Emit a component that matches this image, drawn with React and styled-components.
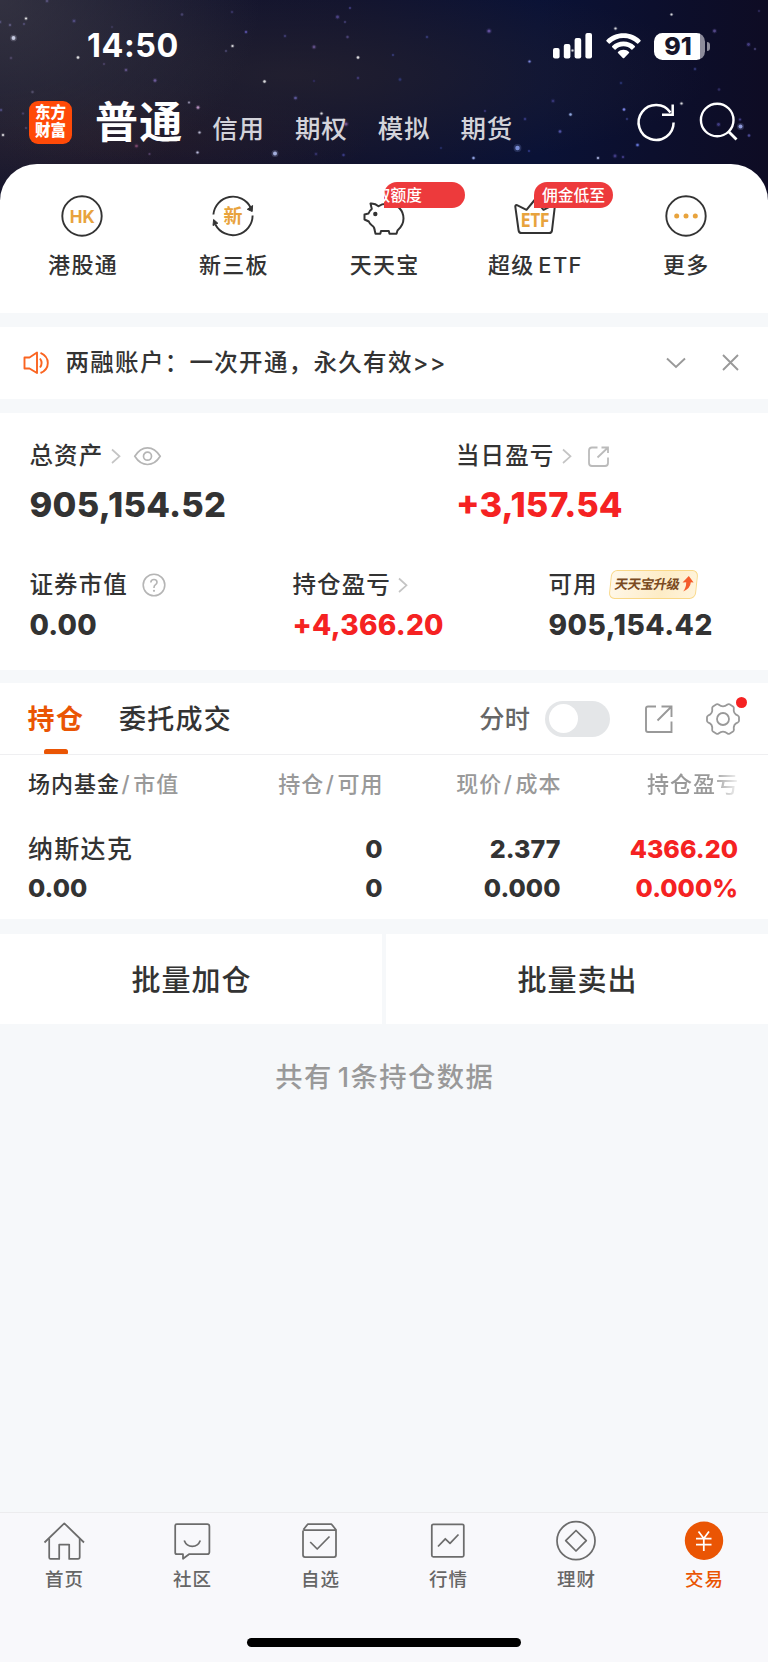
import React from 'react';
import styled, { createGlobalStyle } from 'styled-components';

const GlobalStyle = createGlobalStyle`
  * { box-sizing: border-box; }
  body {
    margin: 0;
    background: #f6f8fa;
    font-family: Inter, "Noto Sans CJK SC", sans-serif;
    color: #333;
    -webkit-font-smoothing: antialiased;
  }
  svg { display: block; flex: none; overflow: visible; }
`;

const Page = styled.div`
  width: 768px;
  height: 1662px;
  display: flex;
  flex-direction: column;
  background: #f6f8fa;
  overflow: hidden;
`;

const Text = styled.span`
  display: block;
  white-space: nowrap;
  font-size: ${p => p.$size}px;
  line-height: ${p => p.$line || 36}px;
  font-weight: ${p => p.$weight || 500};
  letter-spacing: ${p => p.$track || 0}px;
  word-spacing: -3.5px;
  margin-right: ${p => -(p.$track || 0)}px;
  color: ${p => p.$color || '#333'};
`;

/* Header */
const Header = styled.header`
  position: relative;
  height: 200px;
  flex: none;
  background:
    radial-gradient(ellipse 260px 200px at 0 0, rgba(70, 68, 78, 0.6), transparent),
    radial-gradient(ellipse 420px 100px at 290px 75px, rgba(40, 36, 48, 0.7), transparent),
    radial-gradient(ellipse 240px 60px at 130px 140px, rgba(48, 30, 38, 0.5), transparent),
    linear-gradient(90deg, #15152c 0, #10122e 45%, #0a1236 70%, #0e0c24 100%);
`;
const Sky = styled.svg`
  position: absolute;
  inset: 0;
`;
const StatusBar = styled.div`
  position: relative;
  height: 92px;
  display: flex;
  align-items: center;
  justify-content: space-between;
  padding: 0 63.5px 0 87px;
`;
const StatusIcons = styled.div`
  display: flex;
  align-items: center;
  gap: 13px;
`;
const Battery = styled.div`
  position: relative;
  width: 51px;
  height: 27px;
  border-radius: 8.5px;
  background: linear-gradient(90deg, #fff 46px, #8d8c9b 46px);
  display: flex;
  align-items: center;
  justify-content: center;
  padding-right: 2px;
  &::after {
    content: '';
    position: absolute;
    left: 53px;
    top: 9px;
    width: 3.5px;
    height: 9px;
    border-radius: 0 4px 4px 0;
    background: #8d8c9b;
  }
`;
const AccountBar = styled.div`
  position: relative;
  height: 60px;
  display: flex;
  align-items: center;
  padding: 0 30px 0 29px;
`;
const Logo = styled.div`
  width: 43px;
  height: 43px;
  border-radius: 9px;
  background: #ff4a08;
  display: flex;
  flex-direction: column;
  align-items: center;
  justify-content: center;
`;
const AccountTabs = styled.nav`
  display: flex;
  gap: 31px;
  margin: 14px 0 0 30px;
`;
const HeaderIcons = styled.div`
  display: flex;
  gap: 25px;
  margin-left: auto;
`;

/* Shortcuts */
const Shortcuts = styled.section`
  position: relative;
  flex: none;
  margin-top: -36.5px;
  height: 149px;
  padding: 28px 7px 0;
  display: grid;
  grid-template-columns: repeat(5, 1fr);
  background: #fff;
  border-radius: 37px 37px 0 0;
`;
const Shortcut = styled.div`
  position: relative;
  display: flex;
  flex-direction: column;
  align-items: center;
  gap: 7px;
`;
const Badge = styled.div`
  position: absolute;
  left: 75px;
  top: -10px;
  width: ${p => p.$width}px;
  height: 26.5px;
  padding-left: ${p => p.$inset}px;
  border-radius: 13px 13px 13px 0;
  background: #ed3a3c;
  overflow: hidden;
`;

/* Notice */
const Notice = styled.section`
  flex: none;
  margin-top: 14.5px;
  height: 71.5px;
  display: flex;
  align-items: center;
  padding: 0 29px 0 23px;
  background: #fff;
`;
const NoticeText = styled.div`
  flex: 1;
  margin: 1px 0 0 16.5px;
`;
const NoticeActions = styled.div`
  display: flex;
  align-items: center;
  gap: 36px;
`;

/* Assets */
const Assets = styled.section`
  flex: none;
  margin-top: 14.5px;
  height: 256.5px;
  padding: 25px 0 0 29.5px;
  background: #fff;
`;
const AssetRow = styled.div`
  display: grid;
  grid-template-columns: ${p => p.$cols};
  margin-bottom: ${p => p.$after || 0}px;
`;
const AssetLabel = styled.div`
  display: flex;
  align-items: center;
  height: 36px;
  margin-bottom: ${p => p.$after}px;
`;
const Chevron = styled.svg`
  margin-left: 8.5px;
`;
const Trailing = styled.div`
  margin-left: ${p => p.$gap}px;
`;
const UpgradeTag = styled.div`
  position: relative;
  width: 89px;
  height: 28.5px;
  margin: -2px 0 0 12.5px;
  display: flex;
  align-items: center;
  gap: 2px;
  padding-left: 6px;
  &::before {
    content: '';
    position: absolute;
    inset: 0 1px;
    border: 1.5px solid #f9d888;
    border-radius: 6px;
    background: linear-gradient(100deg, #fff8ea, #fdecc6 60%, #fff4dc);
    transform: skewX(-6deg);
  }
  & > * { position: relative; }
`;
const TagText = styled.span`
  font-size: 13.3px;
  line-height: 20px;
  font-weight: 700;
  color: #7a4a22;
  white-space: nowrap;
  letter-spacing: -0.4px;
  transform: skewX(-10deg);
`;

/* Holdings */
const Holdings = styled.section`
  flex: none;
  margin-top: 13.5px;
  height: 236px;
  background: #fff;
`;
const TabBar = styled.div`
  height: 72px;
  display: flex;
  align-items: center;
  padding: 0 28px 0 27.5px;
  border-bottom: 1px solid #efeff1;
`;
const Tab = styled.div`
  position: relative;
  height: 71px;
  display: flex;
  align-items: center;
  padding-top: 2px;
  margin-right: 36px;
  &::after {
    content: '';
    display: ${p => (p.$active ? 'block' : 'none')};
    position: absolute;
    left: 16px;
    bottom: 0;
    width: 24.5px;
    height: 5px;
    border-radius: 2.5px 2.5px 1px 1px;
    background: #ea5504;
  }
`;
const TabTools = styled.div`
  display: flex;
  align-items: center;
  margin-left: auto;
`;
const Toggle = styled.div`
  width: 64.5px;
  height: 36px;
  margin: 0 35.5px 0 15px;
  padding: 3.5px;
  border-radius: 18px;
  background: #e4e6e8;
  &::before {
    content: '';
    display: block;
    width: 29px;
    height: 29px;
    border-radius: 50%;
    background: #fff;
  }
`;
const GearButton = styled.div`
  position: relative;
  margin-left: 33px;
  &::after {
    content: '';
    position: absolute;
    right: -7px;
    top: -5.5px;
    width: 11px;
    height: 11px;
    border-radius: 50%;
    background: #f52222;
  }
`;
const TableRow = styled.div`
  display: grid;
  grid-template-columns: 177px 177.5px 178px 177.5px;
  height: ${p => p.$height}px;
  align-items: center;
  margin-left: 28px;
  margin-top: ${p => p.$before || 0}px;
`;
const Cell = styled.div`
  display: flex;
  justify-content: ${p => (p.$start ? 'flex-start' : 'flex-end')};
`;
const FadeCell = styled(Cell)`
  mask-image: linear-gradient(90deg, #000 calc(100% - 26px), rgba(0, 0, 0, 0.12));
`;

/* Batch actions */
const BatchActions = styled.section`
  flex: none;
  margin-top: 15px;
  height: 90px;
  display: grid;
  grid-template-columns: 1fr 1fr;
  gap: 4px;
`;
const BatchButton = styled.div`
  display: flex;
  align-items: center;
  justify-content: center;
  padding-top: 3px;
  background: #fff;
`;
const Summary = styled.div`
  display: flex;
  justify-content: center;
  padding-top: 36px;
`;

/* Bottom navigation */
const BottomNav = styled.nav`
  flex: none;
  margin-top: auto;
  height: 150px;
  display: flex;
  flex-direction: column;
  justify-content: space-between;
  align-items: center;
  padding-bottom: 15px;
  border-top: 1.5px solid #ececee;
  background: #f8f8fb;
`;
const NavItems = styled.div`
  width: 100%;
  display: grid;
  grid-template-columns: repeat(6, 1fr);
  padding-top: 7px;
`;
const NavItem = styled.div`
  display: flex;
  flex-direction: column;
  align-items: center;
`;
const HomeIndicator = styled.div`
  width: 274px;
  height: 9.5px;
  border-radius: 5px;
  background: #000;
`;

const STARS = [
  [13.5, 38, 2.4, '#e4e8ff'], [26, 18.5, 1.4, '#fff'], [10, 25, 1.4, '#6a6690'], [24, 24, 1.2, '#5d5884'],
  [0, 22, 1.6, '#5b5880'], [74, 21, 1.7, '#57528a'], [47, 1, 1.6, '#5b5680'], [78, 57.5, 1.5, '#fff'],
  [126, 70, 1.6, '#685a90'], [155, 80.5, 1.7, '#7a65ac'], [104, 64, 1.3, '#51486e'], [32.5, 92, 1.5, '#585470'],
  [182, 14.5, 1.5, '#4d4874'], [112, 27, 1.2, '#433f62'], [11, 58, 1.5, '#514a68'], [246, 32, 1.5, '#5c55b0'],
  [232.5, 46, 1.4, '#fff'], [226, 51, 1.2, '#54507c'], [232, 12, 1.4, '#3f3b70'], [264.5, 81.5, 1.5, '#fff'],
  [285, 36, 1.4, '#484480'], [314, 47, 1.8, '#6b5795'], [337.5, 17, 1.8, '#544a93'], [350, 8, 1.3, '#49448e'],
  [345, 22, 1.3, '#49447c'], [347.5, 37, 1.5, '#51487f'], [358, 57.5, 1.5, '#fff'], [358, 78, 1.5, '#453e7b'],
  [295.5, 98, 1.7, '#6560ab'], [314, 81, 1.2, '#353069'], [198, 107.5, 1.7, '#cda1d3'], [189, 102.5, 1.3, '#a19bb7'],
  [199.5, 132.5, 1.4, '#d6d6ee'], [197.5, 152.5, 1.4, '#d9dbff'], [275, 153.5, 2.5, '#bfcdff'], [321.5, 113.5, 1.4, '#fff'],
  [346, 124, 2, '#80609f'], [136.5, 146, 1.7, '#874e76'], [149.5, 154, 1.3, '#5b4670'], [3, 135, 1.4, '#fff'],
  [1, 110, 1.5, '#545288'], [23, 113.5, 1.4, '#4d4670'], [26, 128, 1.3, '#514a73'], [316, 154, 1.6, '#38366f'],
  [343.5, 155, 1.5, '#3f4090'], [489, 31, 2, '#705aaf'], [427, 37, 1.4, '#3d4284'], [393, 55, 1.3, '#3d4284'],
  [529.5, 61.5, 1.4, '#8e9af8'], [400, 79.5, 1.6, '#333c7c'], [671.5, 14.5, 1.3, '#fff'], [615.5, 28.5, 1.4, '#fff'],
  [572.5, 50.5, 1.3, '#fff'], [714.5, 31, 1.8, '#61529a'], [748.5, 44.5, 1.8, '#4d4590'], [759, 11, 1.3, '#353065'],
  [755, 49, 1.2, '#514d86'], [695, 69, 1.5, '#333a7a'], [621, 83, 1.4, '#303a7d'], [719, 89.5, 1.5, '#353169'],
  [553, 101, 1.7, '#3c3b81'], [570.5, 114.5, 1.5, '#a9c2ff'], [624, 109.5, 1.5, '#8a94ff'], [681.5, 103.5, 1.4, '#fff'],
  [740.5, 126.5, 2.5, '#a9b7ff'], [718.5, 124.5, 1.8, '#494492'], [749, 135.5, 1.5, '#5451a4'], [740, 119.5, 1.4, '#4b4694'],
  [560, 131.5, 1.6, '#5c5eb8'], [525, 119, 1.5, '#393d86'], [517.5, 148, 2.8, '#8fa5f5'], [473.5, 158, 1.5, '#a8bbff'],
  [529, 151, 1.3, '#353e90'], [598, 158, 1.4, '#c8d2ff'], [637.5, 145, 1.6, '#7082ef'], [615, 156, 1.8, '#494291'],
  [623, 157, 1.4, '#4d469a'], [485, 111, 1.3, '#423c88'], [441, 148, 1.3, '#2a3370'], [627, 119, 1.3, '#384087'],
];

const INK = '#333';
const AMBER = '#e8a33d';

const SignalIcon = () => (
  <svg width="40" height="26" fill="#fff">
    <rect x="0" y="15" width="6.6" height="10.5" rx="2" />
    <rect x="10.8" y="11" width="6.6" height="14.5" rx="2" />
    <rect x="21.6" y="5" width="6.6" height="20.5" rx="2" />
    <rect x="32.4" y="0" width="6.6" height="25.5" rx="2" />
  </svg>
);
const WifiIcon = () => (
  <svg width="35" height="26" viewBox="0 0 35 26" fill="#fff">
    <path d="M17.5 0.3C24.2 0.3 30.2 2.9 34.6 7.2Q35 7.8 34.5 8.3L32.2 10.6Q31.7 11 31.1 10.5C27.5 7 22.8 5 17.5 5S7.500 7 3.900 10.500Q3.300 11 2.800 10.600L.5 8.300Q0 7.800 .4 7.200C4.800 2.900 10.800 .3 17.500 .3Z" />
    <path d="M17.5 8.600C21.900 8.600 25.900 10.300 28.800 13.100Q29.300 13.700 28.800 14.200L26.400 16.500Q25.900 16.900 25.300 16.400C23.200 14.400 20.500 13.300 17.500 13.300S11.800 14.400 9.700 16.400Q9.100 16.900 8.600 16.500L6.200 14.200Q5.700 13.700 6.200 13.100C9.100 10.300 13.100 8.600 17.500 8.600Z" />
    <path d="M17.5 16.800C19.600 16.800 21.600 17.600 23 18.900Q23.500 19.500 23 20L18.200 24.900Q17.500 25.500 16.800 24.900L12 20Q11.500 19.500 12 18.900C13.400 17.600 15.400 16.800 17.500 16.800Z" />
  </svg>
);
const RefreshIcon = () => (
  <svg width="38" height="38" viewBox="0 0 38 38" fill="none" stroke="#fff" strokeWidth="2.5">
    <path d="M36.600 19.500A17.500 17.500 0 1 1 33.500 9.500" />
    <path d="M35.700 1.500V11.700H25" />
  </svg>
);
const SearchIcon = () => (
  <svg width="38" height="38" viewBox="0 0 38 38" fill="none" stroke="#fff" strokeWidth="2.400">
    <circle cx="17.200" cy="17" r="16.300" />
    <path d="M28.500 28.500L36.500 36.500" strokeWidth="2.800" />
  </svg>
);

const iconText = { textAnchor: 'middle', fill: AMBER, fontFamily: 'Inter, "Noto Sans CJK SC", sans-serif' };

const HkIcon = () => (
  <svg width="48" height="48" fill="none" stroke={INK} strokeWidth="1.900">
    <circle cx="24" cy="24" r="19.700" />
    <text x="24.300" y="30.500" fontSize="17.800" fontWeight="700" stroke="none" textLength="25" lengthAdjust="spacingAndGlyphs" {...iconText}>HK</text>
  </svg>
);
const NewBoardIcon = () => (
  <svg width="48" height="48" fill="none" stroke={INK} strokeWidth="1.900">
    <path d="M4.400 22.500A19.700 19.700 0 0 1 41.500 15.300M43.600 23.500A19.700 19.700 0 0 1 6.500 32.700" />
    <path d="M43.600 13.500L43.200 19.500L38.300 17.300ZM4.600 27.500L8.800 31.200L4 33.500Z" fill={INK} strokeWidth="1" />
    <text x="24" y="31" fontSize="19" fontWeight="700" stroke="none" {...iconText}>新</text>
  </svg>
);
const PigIcon = () => (
  <svg width="48" height="48" fill="none" stroke={INK} strokeWidth="2" strokeLinejoin="round">
    <path d="M10.500 11.500Q15 11 18.500 14.200Q22 11.500 28 11.800C38 12 43.500 18.500 43.500 26.500C43.500 31 41.500 35 37.500 38.500L36.500 41.700H29.500L28.800 39H21L20.300 41.700H15.500L14.500 37.500Q14.500 35 11.500 33Q9.500 31.500 8.800 29.500L4.500 27.500V22.500L8.500 21.500Q9.500 18.500 11.800 17Z" />
    <circle cx="15.300" cy="22" r="2.200" fill={INK} stroke="none" />
  </svg>
);
const EtfIcon = () => (
  <svg width="48" height="48" fill="none" stroke={INK} strokeWidth="2" strokeLinejoin="round">
    <path d="M6 13.200L15.500 17.800L24 7.500L32.500 17.800L42 13.200Q44 12.600 43.800 14.600L41 38.500Q40.600 41 38.200 41H10.500Q8 41 7.600 38.500L4.300 14.600Q4.200 12.600 6 13.200Z" />
    <text x="24.200" y="34.800" fontSize="18.500" fontWeight="800" stroke="none" textLength="28" lengthAdjust="spacingAndGlyphs" {...iconText}>ETF</text>
  </svg>
);
const MoreIcon = () => (
  <svg width="48" height="48" fill="none">
    <circle cx="24" cy="24" r="19.700" stroke={INK} strokeWidth="1.900" />
    {[14.700, 24, 33.300].map(x => <circle key={x} cx={x} cy="24" r="2.500" fill={AMBER} />)}
  </svg>
);
const SpeakerIcon = () => (
  <svg width="26" height="24" viewBox="0 0 26 24" fill="none" stroke="#fa6420" strokeWidth="1.900" strokeLinejoin="round">
    <path d="M1.500 6.500H6.500L14 1.500V22L6.500 17.500H1.500Z" />
    <path d="M17 7.500Q20.200 12 17 16.500M17.500 1.800Q24.800 5 24.800 12T17.500 22" />
  </svg>
);
const ChevronRight = () => (
  <Chevron width="10" height="16" viewBox="0 0 10 16" fill="none" stroke="#c4c4c4" strokeWidth="1.700">
    <path d="M1 1.500L8.500 8.300L1 15" />
  </Chevron>
);
const EyeIcon = () => (
  <svg width="27" height="20" viewBox="0 0 27 20" fill="none" stroke="#b5b5b5" strokeWidth="1.700">
    <path d="M.8 10.300Q6 1.800 13.500 1.800T26.200 10.300Q21 18.500 13.500 18.500T.8 10.300Z" />
    <circle cx="13.500" cy="10.200" r="4" />
  </svg>
);
const ShareSmallIcon = () => (
  <svg width="21" height="21" viewBox="0 0 21 21" fill="none" stroke="#bbb" strokeWidth="1.800">
    <path d="M9.500 1.500H4Q1 1.500 1 4.500V17Q1 20 4 20H17Q20 20 20 17V11.500M13.500 1.500H20V7M19.500 2L9.500 11.500" />
  </svg>
);
const HelpIcon = () => (
  <svg width="24" height="24" viewBox="0 0 24 24" fill="none" stroke="#b5b5b5" strokeWidth="1.600">
    <circle cx="12" cy="12" r="10.800" />
    <path d="M8.800 9.500Q9 6.500 12 6.500T15 9.200Q15 10.700 13.500 11.700T12 14.500V15" />
    <circle cx="12" cy="17.800" r="1.100" fill="#b5b5b5" stroke="none" />
  </svg>
);
const UpArrowIcon = () => (
  <svg width="12" height="16" viewBox="0 0 12 16" fill="#f45c2c">
    <path d="M6.800 0L11.600 6.500L8.800 6.300Q8.500 12.500 1 15.500Q4.300 12 4.200 6.300L.5 6.500Z" />
  </svg>
);
const ShareIcon = () => (
  <svg width="28" height="28" viewBox="0 0 28 28" fill="none" stroke="#999" strokeWidth="1.900">
    <path d="M11 1.500H3Q1 1.500 1 3.500V25Q1 27 3 27H26.500V16.500M16.500 1.500H26.500V12M26 2L12.500 15.500" />
  </svg>
);
const GearIcon = () => (
  <svg width="34" height="32" viewBox="0 0 34 32" fill="none" stroke="#999" strokeWidth="1.800" strokeLinejoin="round">
    <path d="M10.500 1.300Q11.500 .7 12.500 1.500Q17 5.200 21.500 1.500Q22.500 .7 23.500 1.300L27 3.500Q28 4.200 27.800 5.200Q27 11 32 12.700Q33 13.200 33 14.200V17.800Q33 18.800 32 19.300Q27 21 27.800 26.800Q28 27.800 27 28.500L23.500 30.700Q22.500 31.300 21.500 30.500Q17 26.800 12.500 30.500Q11.500 31.300 10.500 30.700L7 28.500Q6 27.800 6.200 26.800Q7 21 2 19.300Q1 18.800 1 17.800V14.200Q1 13.200 2 12.700Q7 11 6.200 5.200Q6 4.200 7 3.500Z" />
    <circle cx="17" cy="16" r="6" />
  </svg>
);

const navStroke = { width: 42, height: 42, viewBox: '0 0 42 42', fill: 'none', stroke: '#6c6c6c', strokeWidth: 1.75, strokeLinejoin: 'round' };
const HomeIcon = () => (
  <svg {...navStroke}>
    <path d="M1.500 22.500L21.300 3.300L41 22.500" />
    <path d="M6.200 18.500V37.500Q6.200 38.900 7.600 38.900H16.200V24.500H26.200V38.900H35Q36.700 38.900 36.700 37.300V18.500" />
  </svg>
);
const ChatIcon = () => (
  <svg {...navStroke}>
    <path d="M5.800 4.200H36.200Q38.400 4.200 38.400 6.400V32Q38.400 34.200 36.200 34.200H18L12 38.700V34.200H5.800Q4.200 34.200 4.200 32.500V5.800Q4.200 4.200 5.800 4.200Z" />
    <path d="M13.200 20.500Q15.500 26.300 21.300 26.300T29.300 20.500" />
  </svg>
);
const WatchIcon = () => (
  <svg {...navStroke}>
    <path d="M4.300 9.700L8.700 4.200H32.500L37 9.700V35Q37 37 35 37H6Q4 37 4 35V10.500M4.300 10.200H37" />
    <path d="M11.200 22L18.200 29L30.500 16.500" />
  </svg>
);
const QuoteIcon = () => (
  <svg {...navStroke}>
    <rect x="4.800" y="4.300" width="32" height="32.500" rx="1.500" />
    <path d="M11 26.500L18.300 18.800L23 23.300L31.500 14.500" />
  </svg>
);
const WealthIcon = () => (
  <svg {...navStroke}>
    <circle cx="21" cy="20.700" r="19" />
    <path d="M21 10.500L31.300 20.700L21 31L10.700 20.700Z" />
  </svg>
);
const TradeIcon = () => (
  <svg {...navStroke} stroke="#fff">
    <circle cx="21" cy="20.700" r="19.200" fill="#ea5504" stroke="none" />
    <path d="M15.500 11.500L20.800 18.500L26 11.500M13 18.700H28.500M13 24.500H28.500M20.800 18.500V31" />
  </svg>
);

const SHORTCUTS = [
  { label: '港股通', Icon: HkIcon },
  { label: '新三板', Icon: NewBoardIcon },
  { label: '天天宝', Icon: PigIcon, badge: '取额度', width: 81, inset: -9 },
  { label: '超级 ETF', Icon: EtfIcon, badge: '佣金低至', width: 79, inset: 7.5 },
  { label: '更多', Icon: MoreIcon },
];
const NAV = [
  ['首页', HomeIcon], ['社区', ChatIcon], ['自选', WatchIcon],
  ['行情', QuoteIcon], ['理财', WealthIcon], ['交易', TradeIcon],
];

const Label = props => <Text $size={23.5} $track={1.1} {...props} />;
const Amount = props => <Text $size={28.1} $weight={800} $track={0.25} {...props} />;
const HeadText = props => <Text $size={22} $track={1} $color="#999" {...props} />;
const Figure = props => <Text $size={25} $weight={800} $track={0.05} {...props} />;
const Slash = styled(HeadText)`
  margin: 0 2.5px;
`;
const NavLabel = styled(Text)`
  margin-top: -1.5px;
`;

export default function App() {
  return (
    <Page>
      <GlobalStyle />
      <Header>
        <Sky width="768" height="200">
          {STARS.map(([x, y, r, c]) => (
            <g key={`${x}-${y}`} fill={c}>
              <circle cx={x} cy={y} r={r * 1.4} opacity="0.2" />
              <circle cx={x} cy={y} r={r * 0.8} opacity="0.8" />
            </g>
          ))}
        </Sky>
        <StatusBar>
          <Text $size={32.3} $weight={700} $track={0.6} $color="#fff">14:50</Text>
          <StatusIcons>
            <SignalIcon />
            <WifiIcon />
            <Battery>
              <Text $size={25} $weight={800} $line={27} $color="#17152a">91</Text>
            </Battery>
          </StatusIcons>
        </StatusBar>
        <AccountBar>
          <Logo>
            <Text $size={15.500} $weight={900} $line={18} $color="#fff">东方</Text>
            <Text $size={15.500} $weight={900} $line={18} $color="#fff">财富</Text>
          </Logo>
          <Trailing $gap={23}>
            <Text $size={43} $line={60} $weight={700} $track={1.3} $color="#fff">普通</Text>
          </Trailing>
          <AccountTabs>
            {['信用', '期权', '模拟', '期货'].map(t => (
              <Text key={t} $size={25.500} $track={0.7} $color="#d3d3da">{t}</Text>
            ))}
          </AccountTabs>
          <HeaderIcons>
            <RefreshIcon />
            <SearchIcon />
          </HeaderIcons>
        </AccountBar>
      </Header>

      <Shortcuts>
        {SHORTCUTS.map(({ label, Icon, badge, width, inset }) => (
          <Shortcut key={label}>
            <Icon />
            <Text $size={22} $track={1.3}>{label}</Text>
            {badge && (
              <Badge $width={width} $inset={Math.max(inset, 0)}>
                <Trailing $gap={Math.min(inset, 0)}>
                  <Text $size={15.800} $line={27} $color="#fff">{badge}</Text>
                </Trailing>
              </Badge>
            )}
          </Shortcut>
        ))}
      </Shortcuts>

      <Notice>
        <SpeakerIcon />
        <NoticeText>
          <Text $size={23.5} $track={1.300}>两融账户：一次开通，永久有效&gt;&gt;</Text>
        </NoticeText>
        <NoticeActions>
          <svg width="20" height="12" fill="none" stroke="#999" strokeWidth="1.900"><path d="M1 1.500L10 10L19 1.500" /></svg>
          <svg width="17" height="17" fill="none" stroke="#999" strokeWidth="1.900"><path d="M1 1L16 16M16 1L1 16" /></svg>
        </NoticeActions>
      </Notice>

      <Assets>
        <AssetRow $cols="426.5px 1fr" $after={44}>
          <div>
            <AssetLabel $after={13}>
              <Label>总资产</Label>
              <ChevronRight />
              <Trailing $gap={13.5}><EyeIcon /></Trailing>
            </AssetLabel>
            <Amount $size={34.500}>905,154.52</Amount>
          </div>
          <div>
            <AssetLabel $after={13}>
              <Label>当日盈亏</Label>
              <ChevronRight />
              <Trailing $gap={16.5}><ShareSmallIcon /></Trailing>
            </AssetLabel>
            <Amount $size={34.500} $track={0} $color="#f52222">+3,157.54</Amount>
          </div>
        </AssetRow>
        <AssetRow $cols="263px 256px 1fr">
          <div>
            <AssetLabel $after={4}>
              <Label>证券市值</Label>
              <Trailing $gap={15}><HelpIcon /></Trailing>
            </AssetLabel>
            <Amount>0.00</Amount>
          </div>
          <div>
            <AssetLabel $after={4}>
              <Label>持仓盈亏</Label>
              <ChevronRight />
            </AssetLabel>
            <Amount $color="#f52222">+4,366.20</Amount>
          </div>
          <div>
            <AssetLabel $after={4}>
              <Label>可用</Label>
              <UpgradeTag>
                <TagText>天天宝升级</TagText>
                <UpArrowIcon />
              </UpgradeTag>
            </AssetLabel>
            <Amount $track={0.5}>905,154.42</Amount>
          </div>
        </AssetRow>
      </Assets>

      <Holdings>
        <TabBar>
          <Tab $active><Text $size={27} $weight={700} $track={1.400} $color="#ea5504">持仓</Text></Tab>
          <Tab><Text $size={27} $track={1.300}>委托成交</Text></Tab>
          <TabTools>
            <Text $size={25.200} $track={0.500} $color="#666">分时</Text>
            <Toggle />
            <ShareIcon />
            <GearButton><GearIcon /></GearButton>
          </TabTools>
        </TabBar>
        <TableRow $height={58}>
          <Cell $start>
            <HeadText $color="#333">场内基金</HeadText>
            <Slash>/</Slash>
            <HeadText>市值</HeadText>
          </Cell>
          <Cell><HeadText>持仓</HeadText><Slash>/</Slash><HeadText>可用</HeadText></Cell>
          <Cell><HeadText>现价</HeadText><Slash>/</Slash><HeadText>成本</HeadText></Cell>
          <FadeCell><HeadText>持仓盈亏</HeadText></FadeCell>
        </TableRow>
        <TableRow $height={39} $before={16}>
          <Cell $start><Text $size={25} $track={1.300}>纳斯达克</Text></Cell>
          <Cell><Figure>0</Figure></Cell>
          <Cell><Figure>2.377</Figure></Cell>
          <Cell><Figure $color="#f52222">4366.20</Figure></Cell>
        </TableRow>
        <TableRow $height={39}>
          <Cell $start><Figure>0.00</Figure></Cell>
          <Cell><Figure>0</Figure></Cell>
          <Cell><Figure>0.000</Figure></Cell>
          <Cell><Figure $color="#f52222">0.000%</Figure></Cell>
        </TableRow>
      </Holdings>

      <BatchActions>
        {['批量加仓', '批量卖出'].map(t => (
          <BatchButton key={t}><Text $size={29} $track={1}>{t}</Text></BatchButton>
        ))}
      </BatchActions>
      <Summary>
        <Text $size={27.3} $track={1.4} $color="#999">共有 1条持仓数据</Text>
      </Summary>

      <BottomNav>
        <NavItems>
          {NAV.map(([label, Icon], i) => (
            <NavItem key={label}>
              <Icon />
              <NavLabel $size={18.500} $track={1} $color={i === 5 ? '#ea5504' : '#666'}>{label}</NavLabel>
            </NavItem>
          ))}
        </NavItems>
        <HomeIndicator />
      </BottomNav>
    </Page>
  );
}
